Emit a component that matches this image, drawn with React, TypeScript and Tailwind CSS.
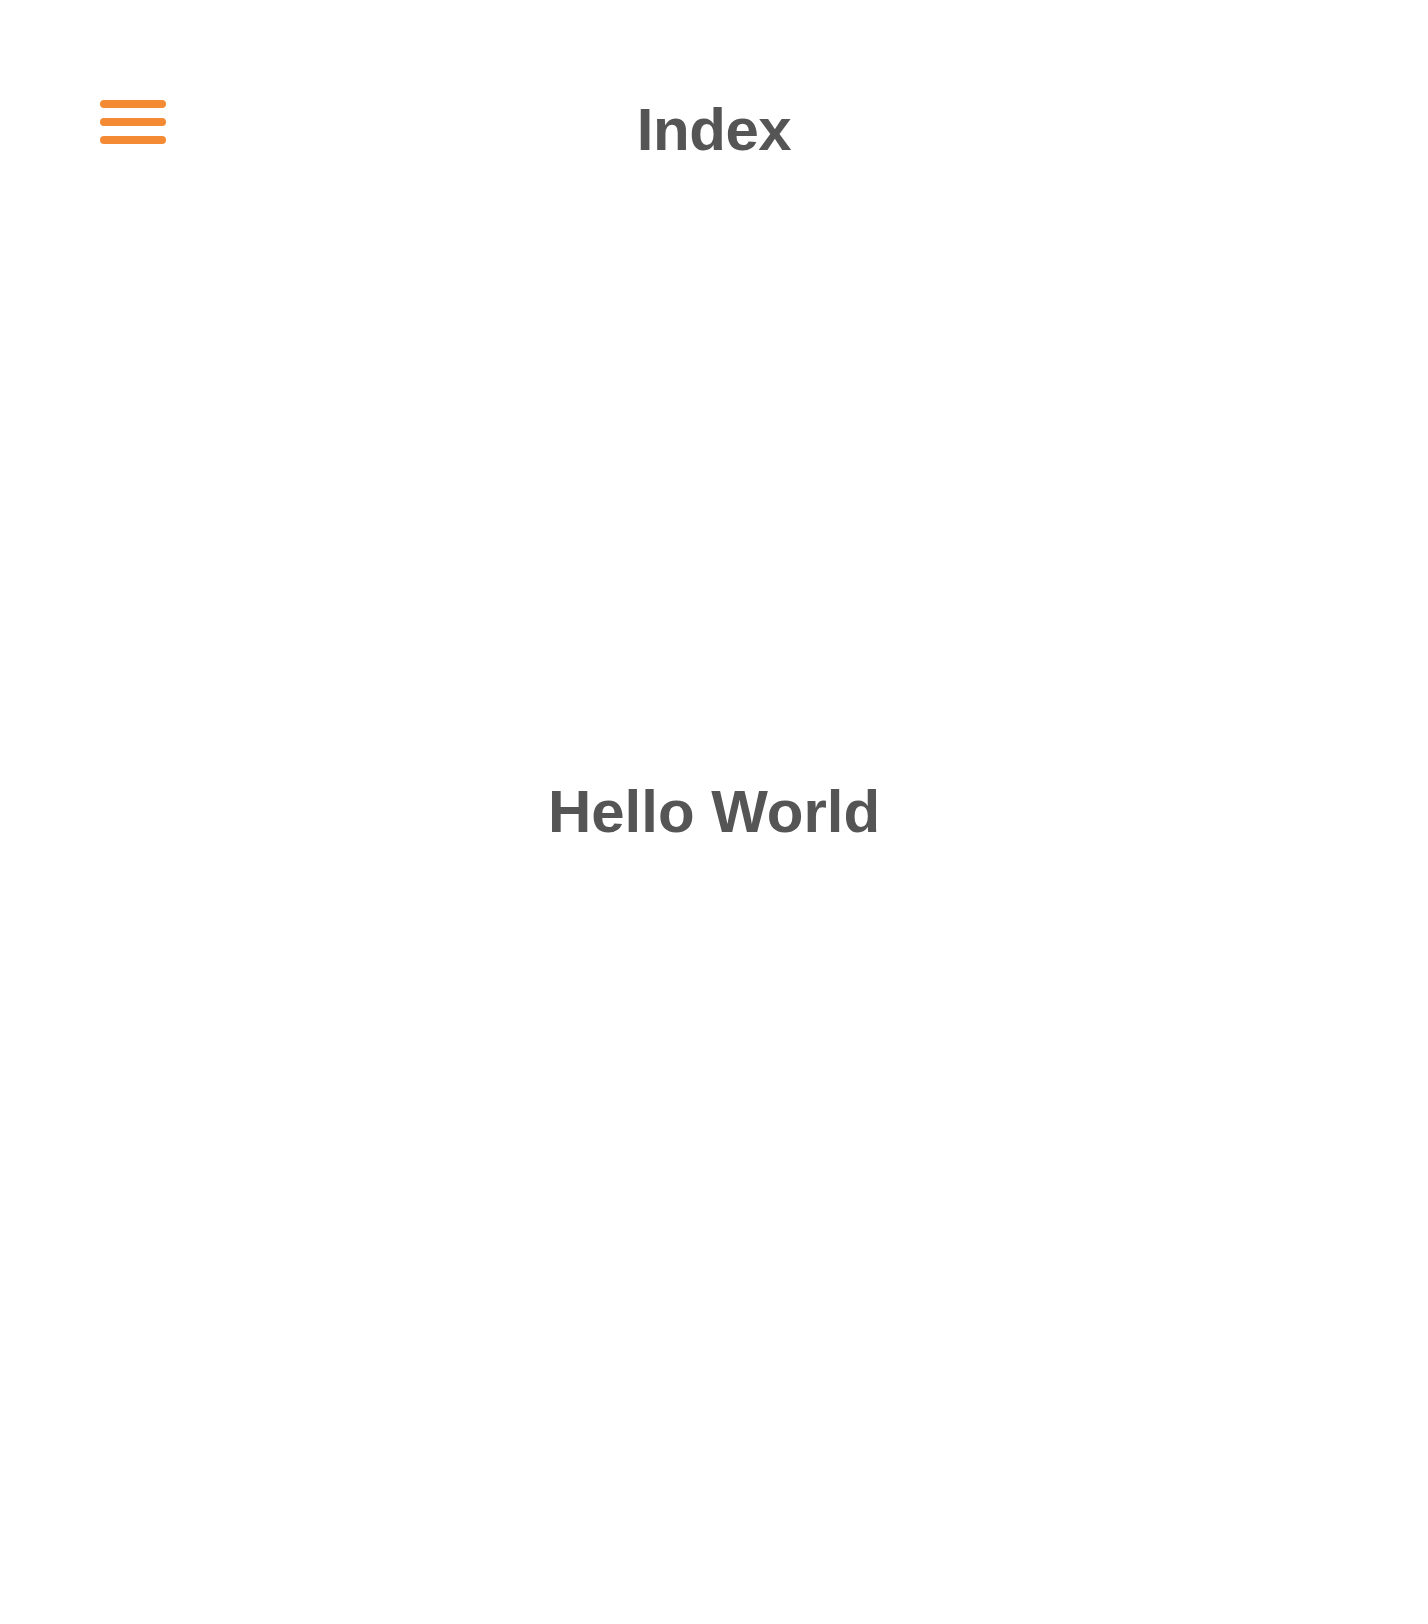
export default function App() {
    return (
        <div className="flex h-screen flex-col bg-white" style={{ fontFamily: '"Liberation Sans", Arial, sans-serif' }}>
            {/* Top bar */}
            <header className="grid h-[160px] shrink-0 grid-cols-3 items-start px-[100px] pt-[100px]">
                <button className="flex w-[66px] flex-col gap-[10px]" aria-label="Menu">
                    <span className="block h-[8px] w-full rounded-full bg-[#f48a33]"></span>
                    <span className="block h-[8px] w-full rounded-full bg-[#f48a33]"></span>
                    <span className="block h-[8px] w-full rounded-full bg-[#f48a33]"></span>
                </button>
                <h1 className="text-center text-[60px] font-bold leading-none tracking-[-0.4px] text-[#555555]">Index</h1>
                <div></div>
            </header>

            <main className="flex flex-1 items-center justify-center">
                <h2 className="text-[60px] font-bold leading-none text-[#555555]">Hello World</h2>
            </main>

            {/* spacer so the greeting sits in the middle of the page */}
            <div className="h-[160px] shrink-0"></div>
        </div>
    );
}
